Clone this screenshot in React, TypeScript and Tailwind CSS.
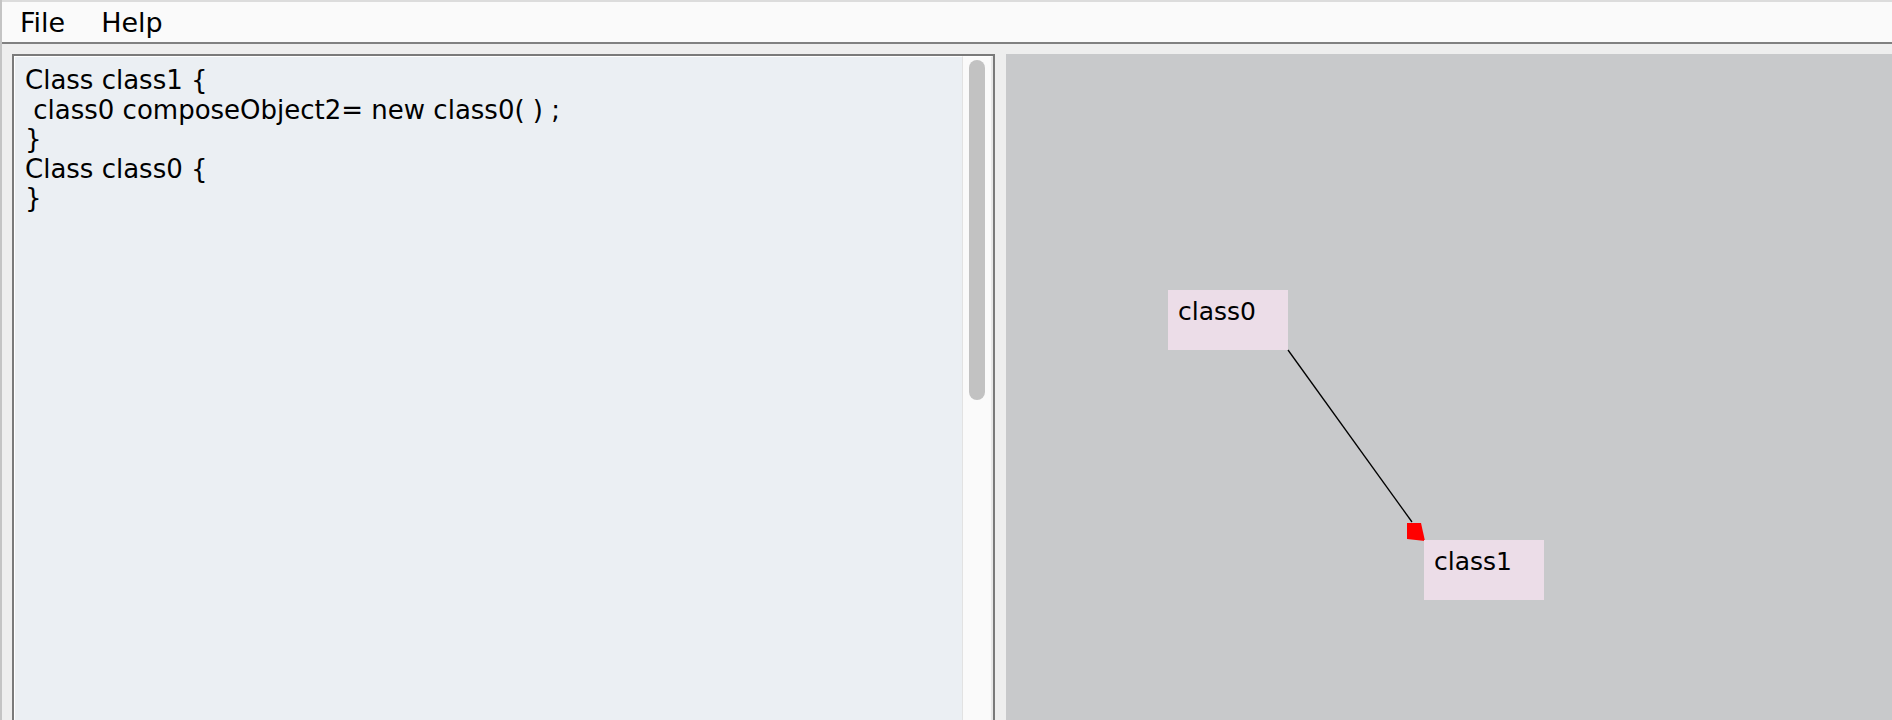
import React from 'react';

const codeLines = [
  'Class class1 {',
  ' class0 composeObject2= new class0( ) ;',
  '}',
  'Class class0 {',
  '}',
];

const nodes = [
  { name: 'class0', x: 162, y: 236 },
  { name: 'class1', x: 418, y: 486 },
];

const font = { fontFamily: '"DejaVu Sans", "Liberation Sans", sans-serif' };

export default function App() {
  return (
    <div
      className="relative flex h-[720px] w-[1892px] flex-col overflow-hidden border-l-2 border-[#c4c4c4] bg-[#eeeeee] text-black"
      style={font}
    >
      {/* window corner mark */}
      <div className="absolute left-[-2px] top-0 h-[12px] w-[2px] bg-[#2b1b1f]" />

      {/* Menu bar */}
      <div className="flex h-[44px] shrink-0 items-start gap-[36px] border-y-2 border-t-[#dcdcdc] border-b-[#808080] bg-[#fafafa] pl-[18px]">
        <span className="pt-[1px] text-[27px] leading-[40px]">File</span>
        <span className="pt-[1px] text-[27px] leading-[40px]">Help</span>
      </div>

      {/* Body */}
      <div className="flex min-h-0 flex-1 gap-[11px] pl-[10px] pt-[10px]">
        {/* Editor panel */}
        <div className="flex h-[700px] w-[983px] shrink-0 border-2 border-[#7a7a7a]">
          <div className="flex-1 border-l border-t border-white bg-[#ebeff3] pl-[10px] pt-[9px]">
            {codeLines.map((line, i) => (
              <div key={i} className="whitespace-pre text-[26px] leading-[29.5px]">
                {line}
              </div>
            ))}
          </div>
          <div className="w-[31px] shrink-0 border-l border-t border-l-[#e2e2e2] border-t-white border-r-2 border-r-[#e8e8e8] bg-[#fafafa] pl-[6px] pt-[3px]">
            <div className="h-[340px] w-[16px] rounded-full bg-[#c2c2c2]" />
          </div>
        </div>

        {/* Diagram canvas */}
        <div className="relative flex-1 bg-[#c8c9cb]">
          <svg className="absolute inset-0 h-full w-full" xmlns="http://www.w3.org/2000/svg">
            <line x1="282" y1="296" x2="406" y2="468" stroke="#000" strokeWidth="1.3" />
            <polygon points="401,469 415,469 419,487 401,485" fill="#ff0000" />
          </svg>
          {nodes.map((n) => (
            <div
              key={n.name}
              className="absolute h-[60px] w-[120px] bg-[#ecdde8] pl-[10px] pt-[8px] text-[25px] leading-[28px]"
              style={{ left: n.x, top: n.y }}
            >
              {n.name}
            </div>
          ))}
        </div>
      </div>
    </div>
  );
}
